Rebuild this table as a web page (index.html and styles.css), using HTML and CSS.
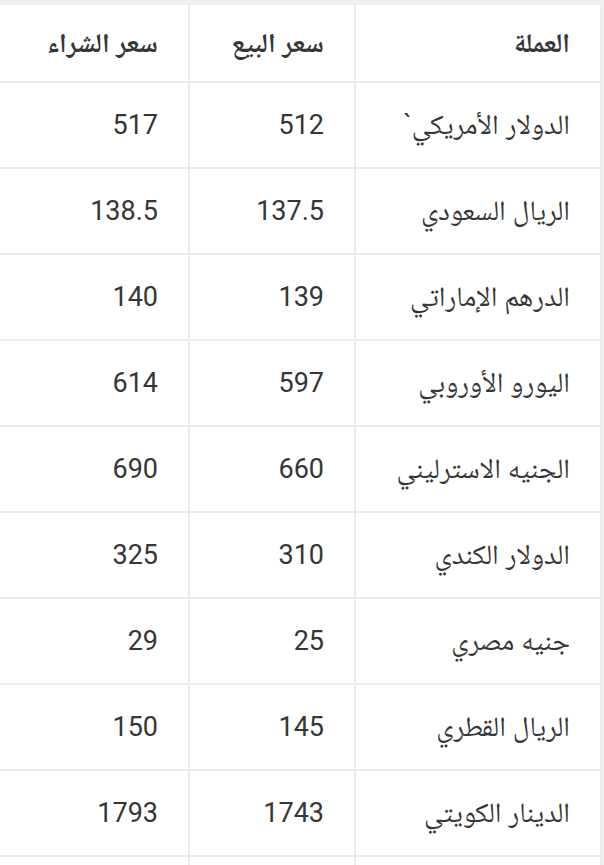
FILE: index.html
```html
<!DOCTYPE html>
<html lang="ar" dir="rtl">
<head>
<meta charset="utf-8">
<title>أسعار العملات</title>
<link rel="stylesheet" href="styles.css">
</head>
<body>
<div class="wrap">
<table class="rates">
  <colgroup>
    <col class="c-name">
    <col class="c-sell">
    <col class="c-buy">
  </colgroup>
  <thead>
    <tr><th>العملة</th><th>سعر البيع</th><th>سعر الشراء</th></tr>
  </thead>
  <tbody>
    <tr><td>الدولار الأمريكي`</td><td>512</td><td>517</td></tr>
    <tr><td>الريال السعودي</td><td>137.5</td><td>138.5</td></tr>
    <tr><td>الدرهم الإماراتي</td><td>139</td><td>140</td></tr>
    <tr><td>اليورو الأوروبي</td><td>597</td><td>614</td></tr>
    <tr><td>الجنيه الاسترليني</td><td>660</td><td>690</td></tr>
    <tr><td>الدولار الكندي</td><td>310</td><td>325</td></tr>
    <tr><td>جنيه مصري</td><td>25</td><td>29</td></tr>
    <tr><td>الريال القطري</td><td>145</td><td>150</td></tr>
    <tr><td>الدينار الكويتي</td><td>1743</td><td>1793</td></tr>
    <tr><td>&nbsp;</td><td>&nbsp;</td><td>&nbsp;</td></tr>
  </tbody>
</table>
</div>
</body>
</html>
```

FILE: styles.css
```css
html, body {
  margin: 0;
  padding: 0;
  background: #eef1f4;
}
.wrap {
  padding: 5px 2px 0 0;
  height: 860px;
  overflow: hidden;
}
.rates {
  border-collapse: collapse;
  table-layout: fixed;
  width: 602px;
  background: #ffffff;
  font-family: Roboto, "Noto Naskh Arabic", "Noto Sans Arabic", "DejaVu Sans", sans-serif;
  color: #363636;
}
.c-name { width: 246px; }
.c-sell { width: 166px; }
.c-buy { width: 190px; }
.rates th,
.rates td {
  border: 2px solid #ebebeb;
  text-align: right;
  padding: 0 30px 0 10px;
  vertical-align: middle;
  white-space: nowrap;
}
.rates thead tr:first-child th {
  border-top: none;
}
.rates th {
  height: 76px;
  font-size: 27px;
  font-weight: 700;
  line-height: 30px;
}
.rates td {
  height: 84px;
  font-size: 27px;
  font-weight: 400;
  line-height: 32px;
}
.rates td:first-child {
  font-size: 28px;
}
```
